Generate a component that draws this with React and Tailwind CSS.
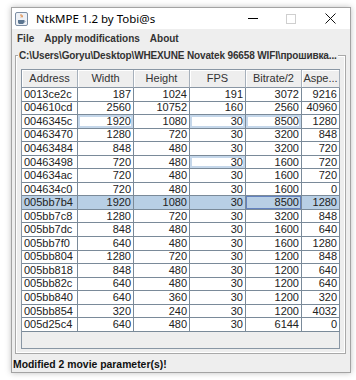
import React from 'react';

const ROWS = [
  ['0013ce2c', 187, 1024, 191, 3072, 9216],
  ['004610cd', 2560, 10752, 160, 2560, 40960],
  ['0046345c', 1920, 1080, 30, 8500, 1280],
  ['00463470', 1280, 720, 30, 3200, 848],
  ['00463484', 848, 480, 30, 3200, 720],
  ['00463498', 720, 480, 30, 1600, 720],
  ['004634ac', 720, 480, 30, 1600, 720],
  ['004634c0', 720, 480, 30, 1600, 0],
  ['005bb7b4', 1920, 1080, 30, 8500, 1280],
  ['005bb7c8', 1280, 720, 30, 3200, 848],
  ['005bb7dc', 848, 480, 30, 1600, 640],
  ['005bb7f0', 640, 480, 30, 1600, 1280],
  ['005bb804', 1280, 720, 30, 1200, 848],
  ['005bb818', 848, 480, 30, 1200, 640],
  ['005bb82c', 640, 480, 30, 1200, 640],
  ['005bb840', 640, 360, 30, 1200, 320],
  ['005bb854', 320, 240, 30, 1200, 4032],
  ['005d25c4', 640, 480, 30, 6144, 0],
];

const HEADERS = ['Address', 'Width', 'Height', 'FPS', 'Bitrate/2', 'Aspe...'];
const SELECTED = 8;
// cells that still show the edit outline
const EDITED = { '2-1': true, '2-3': true, '2-4': true, '5-3': true };

function JavaIcon() {
  return (
    <svg width="13" height="14" viewBox="0 0 13 14">
      <rect x="0.5" y="0.5" width="12" height="13" rx="1.5" fill="#eef1f6" stroke="#7d8ea3" />
      <path d="M3 8h6v2.2c0 1-.8 1.8-1.8 1.8H4.8C3.8 12 3 11.2 3 10.2z" fill="#5b7590" />
      <path d="M9 8.6c1.2 0 1.4 1.6 0 1.8" fill="none" stroke="#5b7590" strokeWidth="0.8" />
      <path d="M6.2 2.2c-1.4 1.2 1 1.8-.2 3.2M7.4 3c-.9.8.6 1.3-.1 2.3" fill="none" stroke="#e0761f" strokeWidth="0.9" />
    </svg>
  );
}

export default function App() {
  return (
    <div className="w-[356px] h-[380px] bg-white pt-[7px] pl-[11px]" style={{ fontFamily: '"Liberation Sans", Arial, sans-serif' }}>
      <div className="w-[340px] h-[366px] border border-[#a3a3a3] bg-[#eeeeee] flex flex-col shadow-[0_0_6px_rgba(0,0,0,0.25)]">
        {/* title bar */}
        <div className="h-[21px] bg-white flex items-center pl-[3px] shrink-0">
          <JavaIcon />
          <span className="ml-[8px] text-[11.5px] text-black" style={{ fontFamily: '"Noto Sans", sans-serif' }}>NtkMPE 1.2 by Tobi@s</span>
          <div className="flex-1" />
          <div className="w-[38px] flex justify-center">
            <div className="w-[10px] h-px bg-black" />
          </div>
          <div className="w-[38px] flex justify-center">
            <div className="w-[10px] h-[10px] border border-[#cfcfcf]" />
          </div>
          <div className="w-[40px] flex justify-center">
            <svg width="11" height="11" viewBox="0 0 11 11">
              <path d="M0.5 0.5L10.5 10.5M10.5 0.5L0.5 10.5" stroke="#111" strokeWidth="1" />
            </svg>
          </div>
        </div>

        {/* menu bar */}
        <div className="h-[19px] flex items-center gap-[10px] pl-[5px] text-[10px] font-bold text-[#333333] shrink-0">
          <span>File</span>
          <span>Apply modifications</span>
          <span>About</span>
        </div>

        {/* titled group */}
        <div className="ml-[3px] mr-[4px] mt-[2px] flex flex-col min-w-0">
          <div className="h-[12px] flex items-center min-w-0">
            <div className="w-[3px] h-[2px] border-t border-[#a9a9a9] border-b border-b-white self-end mb-[5px] shrink-0" />
            <span className="px-px text-[10px] font-bold text-[#333333] leading-[12px] whitespace-nowrap tracking-[-0.14px] shrink-0">C:\Users\Goryu\Desktop\WHEXUNE Novatek 96658 WIFI\прошивка...</span>
            <div className="flex-1 min-w-[3px] h-[2px] border-t border-[#a9a9a9] border-b border-b-white self-end mb-[5px]" />
          </div>
          <div className="-mt-[6px] border-l border-r border-b border-[#a9a9a9] shadow-[inset_1px_0_0_white,inset_-1px_0_0_white,inset_0_-1px_0_white] pt-[13px] pl-[5px] pr-[4px] pb-[4px]">
            <div className="w-[319px] h-[280px] border border-[#8996a4] bg-[#eeeeee] text-[11px] text-[#222] leading-none">
              <div className="grid grid-cols-[56px_56px_56px_56px_56px_38px] h-[18px]">
                {HEADERS.map((h) => (
                  <div key={h} className="border-r border-b border-r-[#a6b0bb] border-b-[#8996a4] bg-[#eeeeee] shadow-[inset_1px_1px_0_white] flex items-center justify-center text-[#333]">
                    {h}
                  </div>
                ))}
              </div>
              {ROWS.map((row, ri) => (
                <div key={ri} className="grid grid-cols-[56px_56px_56px_56px_56px_38px] h-[13.55px]">
                  {row.map((v, ci) => {
                    const sel = ri === SELECTED;
                    const focus = sel && ci === 4;
                    const edited = EDITED[`${ri}-${ci}`];
                    return (
                      <div
                        key={ci}
                        className={`border-r border-b border-[#7a8a99] flex items-center overflow-hidden ${ci === 0 ? 'justify-start pl-[2px]' : 'justify-end pr-[2px]'} ${sel ? 'bg-[#b8cfe5]' : 'bg-white'} ${focus ? 'shadow-[inset_0_0_0_1px_#6382bf]' : ''} ${edited ? 'shadow-[inset_0_0_0_2px_#c5d7ea]' : ''}`}
                      >
                        {v}
                      </div>
                    );
                  })}
                </div>
              ))}
            </div>
          </div>
        </div>

        {/* status */}
        <div className="flex-1 flex items-center pl-px pt-[3px] text-[10.4px] font-bold text-[#111]">
          Modified 2 movie parameter(s)!
        </div>
      </div>
    </div>
  );
}
